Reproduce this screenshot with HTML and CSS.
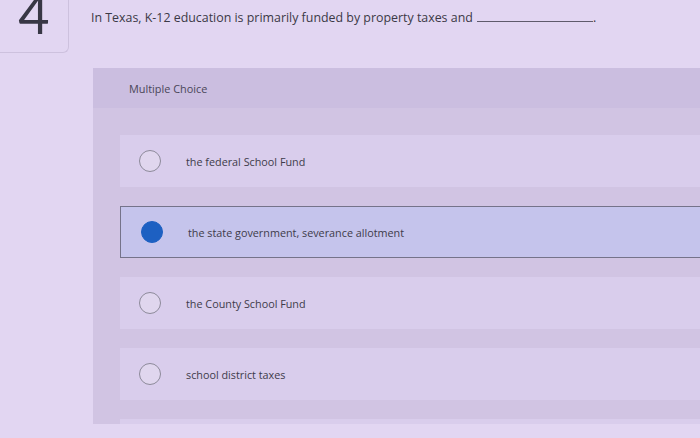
FILE: index.html
```html
<!DOCTYPE html>
<html>
<head>
<meta charset="utf-8">
<link rel="stylesheet" href="styles.css">
</head>
<body>
<div class="page">
  <div class="head">
    <div class="numbox"><span class="num">4</span></div>
    <p class="question">In Texas, K-12 education is primarily funded by property taxes and <span class="blank"></span>.</p>
  </div>
  <div class="panel">
    <div class="panel-head">Multiple Choice</div>
    <div class="options">
      <div class="option"><span class="radio"></span><span class="label">the federal School Fund</span></div>
      <div class="option selected"><span class="radio"></span><span class="label">the state government, severance allotment</span></div>
      <div class="option"><span class="radio"></span><span class="label">the County School Fund</span></div>
      <div class="option"><span class="radio"></span><span class="label">school district taxes</span></div>
      <div class="option"></div>
    </div>
  </div>
</div>
</body>
</html>
```
FILE: styles.css
```css
html, body {
  margin: 0;
  padding: 0;
}
body {
  width: 700px;
  height: 438px;
  overflow: hidden;
  background: #e2d6f2;
  font-family: "Open Sans", "Liberation Sans", sans-serif;
  color: #3d3a48;
}
.page {
  display: flex;
  flex-direction: column;
  height: 438px;
}
.head {
  display: flex;
  align-items: flex-start;
  height: 53px;
}
.numbox {
  width: 68px;
  height: 52px;
  border-right: 1px solid #cdc1de;
  border-bottom: 1px solid #cdc1de;
  border-bottom-right-radius: 6px;
  display: flex;
  justify-content: center;
  overflow: hidden;
}
.num {
  font-family: "Lato", sans-serif;
  font-weight: 400;
  font-size: 54px;
  line-height: 40px;
  color: #383745;
  margin-top: -6px;
  margin-left: 0;
}
.question {
  margin: 10px 0 0 22px;
  font-size: 12.4px;
  line-height: 16px;
  color: #3b3946;
}
.blank {
  display: inline-block;
  width: 116px;
  border-bottom: 1px solid #5f5b6c;
  margin-left: 1px;
}
.panel {
  margin: 15px 0 0 93px;
  height: 356px;
  background: #d1c4e3;
  display: flex;
  flex-direction: column;
  overflow: hidden;
}
.panel-head {
  height: 40px;
  flex: none;
  background: #cbbee0;
  display: flex;
  align-items: center;
  padding-left: 36px;
  font-size: 10.9px;
  color: #4a4658;
}
.options {
  padding: 27px 0 0 27px;
  display: flex;
  flex-direction: column;
  gap: 19px;
}
.option {
  height: 52px;
  flex: none;
  background: #d9cdec;
  display: flex;
  align-items: center;
  padding-left: 19px;
  box-sizing: border-box;
}
.option.selected {
  background: #c5c4ec;
  border: 1px solid #75738a;
  border-right: none;
  padding-left: 20px;
}
.radio {
  width: 22px;
  height: 22px;
  box-sizing: border-box;
  border: 1.5px solid #8d8a9a;
  border-radius: 50%;
  background: #e0d6ee;
  flex: none;
}
.selected .radio {
  background: #1d60c2;
  border-color: #1d60c2;
}
.label {
  margin-left: 25px;
  font-size: 10.8px;
  color: #3e3b4a;
}
```
